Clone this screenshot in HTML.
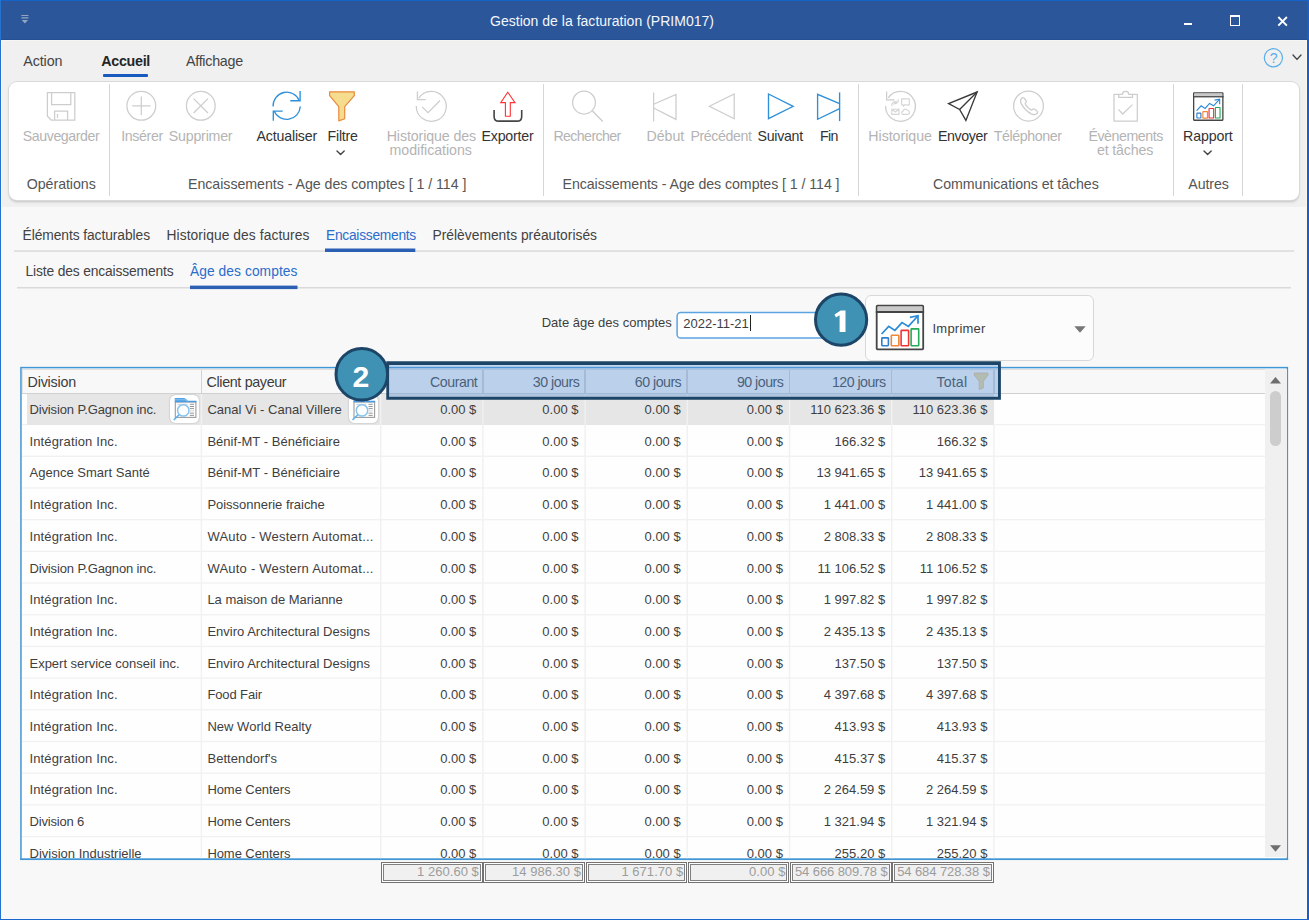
<!DOCTYPE html><html lang="fr"><head><meta charset="utf-8"><title>Gestion de la facturation</title><style>
html,body{margin:0;padding:0;}
body{width:1309px;height:920px;position:relative;overflow:hidden;background:#f8f8f8;font-family:"Liberation Sans",sans-serif;}
.t{position:absolute;white-space:pre;line-height:1;font-family:"Liberation Sans",sans-serif;}
.a{position:absolute;}
svg{position:absolute;overflow:visible;}

</style></head><body>
<div class="a" style="left:0;top:0;width:1309px;height:40px;background:#2b579a;"></div>
<div class="a" style="left:0;top:39px;width:1309px;height:1px;background:#254f94;"></div>
<div class="a" style="left:0;top:40px;width:1309px;height:41px;background:#f0f0f0;"></div>
<div class="a" style="left:0;top:81px;width:1309px;height:126px;background:#f0f0f0;"></div>
<div class="a" style="left:0;top:207px;width:1309px;height:713px;background:#f8f8f8;"></div>
<div class="a" style="left:9px;top:82px;width:1290px;height:118px;background:#fff;border-radius:8px;box-shadow:0 0 0 1px #d9d9d9,0 2px 2.5px rgba(0,0,0,.2);"></div>
<div class="a" style="left:109px;top:84px;width:1.4px;height:112px;background:#d6d6d6;"></div>
<div class="a" style="left:543px;top:84px;width:1.4px;height:112px;background:#d6d6d6;"></div>
<div class="a" style="left:858px;top:84px;width:1.4px;height:112px;background:#d6d6d6;"></div>
<div class="a" style="left:1173px;top:84px;width:1.4px;height:112px;background:#d6d6d6;"></div>
<div class="a" style="left:1242px;top:84px;width:1.4px;height:112px;background:#d6d6d6;"></div>
<div class="a" style="left:0;top:0;width:1309px;height:1px;background:#1463c9;"></div>
<div class="a" style="left:0;top:0;width:1px;height:920px;background:#2572cf;"></div>
<div class="a" style="left:1307px;top:0;width:2px;height:920px;background:#1a5fc4;"></div>
<div class="a" style="left:0;top:919px;width:1309px;height:1px;background:#1a66cc;"></div>
<div class="a" style="left:1px;top:40px;width:1px;height:879px;background:#fbf9f4;"></div>
<div class="a" style="left:1306px;top:40px;width:1px;height:879px;background:#fbf7ea;"></div>
<div class="a" style="left:1px;top:40px;width:1306px;height:1px;background:#f7f5f1;"></div>
<div class="a" style="left:1px;top:918px;width:1306px;height:1px;background:#fbf7ea;"></div>
<div class="a" style="left:1184px;top:23px;width:8px;height:2.4px;background:#fff;"></div>
<div class="a" style="left:1229.7px;top:15.3px;width:8.6px;height:7.4px;border:1.7px solid #fff;border-top-width:2.9px;"></div>
<svg style="left:1277px;top:16px" width="11" height="11" viewBox="0 0 11 11"><path d="M1.3 1 L9.9 9.6 M9.9 1 L1.3 9.6" stroke="#fff" stroke-width="1.9" fill="none"/></svg>
<svg style="left:21px;top:14.3px" width="8" height="11" viewBox="0 0 8 11"><path d="M0.4 1.5h7M0.4 3.9h7" stroke="#97a6c0" stroke-width="1.1"/><path d="M0.8 5.9h6.2L3.9 9.6z" fill="#97a6c0"/></svg>
<div class="a" style="left:103px;top:73.6px;width:45px;height:3px;background:#185abd;border-radius:1px;"></div>
<svg style="left:336.4px;top:150.2px" width="9.2" height="5.6" viewBox="-4.6 -2.8 9.2 5.6"><path d="M-3.6 -1.8 L0 1.8 L3.6 -1.8" stroke="#444" stroke-width="1.4" fill="none" stroke-linecap="round" stroke-linejoin="round"/></svg>
<svg style="left:1202.7px;top:150.2px" width="9.2" height="5.6" viewBox="-4.6 -2.8 9.2 5.6"><path d="M-3.6 -1.8 L0 1.8 L3.6 -1.8" stroke="#444" stroke-width="1.4" fill="none" stroke-linecap="round" stroke-linejoin="round"/></svg>
<svg style="left:1292.3px;top:53.8px" width="10" height="6.4" viewBox="-5 -3.2 10 6.4"><path d="M-4 -2.2 L0 2.2 L4 -2.2" stroke="#444" stroke-width="1.4" fill="none" stroke-linecap="round" stroke-linejoin="round"/></svg>
<svg style="left:0px;top:0px" width="1309" height="210" viewBox="0 0 1309 210">
<g fill="none" stroke="#cdcdcd" stroke-width="1.25" stroke-linejoin="miter">
<path d="M47.4 92.7H74.8V120H51.2L47.4 116.2Z"/>
<path d="M51.6 92.7V104.6H70.8V92.7"/>
<path d="M54.6 120V111.2H67.6V120"/>
<path d="M57.5 114V117.8"/>
<circle cx="141.3" cy="105.8" r="14.4"/>
<path d="M132.2 105.8H150.5M141.3 96.6V115"/>
<circle cx="200.8" cy="105.8" r="14.4"/>
<path d="M193.6 98.6L208 113M208 98.6L193.6 113"/>
</g></svg>
<svg style="left:0px;top:0px" width="1309" height="210" viewBox="0 0 1309 210">
<g fill="none" stroke="#2e90d8" stroke-width="1.35">
<path d="M273.12 106.51A13.6 13.6 0 0 1 299.31 100.71"/>
<path d="M300.1 91.1V100.7H290.3"/>
<path d="M300.28 106.51A13.6 13.6 0 0 1 274.09 110.89"/>
<path d="M273.3 120.7V111.1H282.7"/>
</g>
<path d="M329.6 91.8H354.3V95.6L344.7 106.6V118.8L338.8 120.9V106.6L329.6 95.6Z" fill="#f6dc8e" stroke="#e98a3c" stroke-width="1.2" stroke-linejoin="round"/>
</svg>
<svg style="left:0px;top:0px" width="1309" height="210" viewBox="0 0 1309 210">
<g fill="none" stroke="#cdcdcd" stroke-width="1.25">
<path d="M416.31 105.88A15.0 15.0 0 1 0 418.72 98.23"/>
<path d="M417.4 91.4V99.7H425.7"/>
<path d="M422.2 106.9L428 112.6L440.1 100.5"/>
</g>
<path d="M494.1 110.1V116.4Q494.1 121.1 498.8 121.1H517Q521.7 121.1 521.7 116.4V110.1" fill="none" stroke="#444" stroke-width="1.6"/>
<path d="M507.8 92.2L515 102.6H510.3V116.2H505.4V102.6H500.7Z" fill="#fff" stroke="#f33" stroke-width="1.1" stroke-linejoin="miter"/>
</svg>
<svg style="left:0px;top:0px" width="1309" height="210" viewBox="0 0 1309 210">
<g fill="none" stroke="#cdcdcd" stroke-width="1.25" stroke-linejoin="miter">
<circle cx="584" cy="102.6" r="11.4"/>
<path d="M592.2 110.8L602.8 121.4" stroke-width="1.4"/>
<path d="M653.6 92.5V121.4"/>
<path d="M653.6 104.3L676 94.4V119.4L653.6 108"/>
<path d="M709.4 106.3L734.2 94V118.7Z"/>
</g>
<g fill="none" stroke="#2e90d8" stroke-width="1.35" stroke-linejoin="miter">
<path d="M793.2 106.3L768.5 94V118.7Z"/>
<path d="M839.6 92.4V121.1"/>
<path d="M839.6 103.7L817.6 94.3V119.3L839.6 108.7"/>
</g>
</svg>
<svg style="left:0px;top:0px" width="1309" height="210" viewBox="0 0 1309 210">
<g fill="none" stroke="#cdcdcd" stroke-width="1.25">
<path d="M885.61 105.88A14.9 14.9 0 1 0 888.29 97.85"/>
<path d="M886.6 91.5V99.9H894.4"/>
</g>
<g fill="none" stroke="#d6d6d6" stroke-width="1.15" stroke-linejoin="round" stroke-linecap="round">
<path d="M892.3 105.6a1.6 1.6 0 0 1 0-2.3l1.2-1.2a1.6 1.6 0 0 1 2.3 0M897.9 99.6a1.6 1.6 0 0 1 0 2.3l-1.2 1.2a1.6 1.6 0 0 1-2.3 0M893.8 104.1L896.4 101.5"/>
<path d="M901.6 98.9H909.3V104.8H904.6L903.3 106.3V104.8H901.6Z"/>
<path d="M891.8 109.2H899V114.4H891.8ZM891.8 109.2L895.4 112L899 109.2"/>
<path d="M903 114.4a1.7 1.7 0 0 1 0-3.3a2.4 2.4 0 0 1 4.5-.6a2 2 0 0 1 .6 3.9Z"/>
</g>
<g fill="none" stroke="#3a3a3a" stroke-width="1.35" stroke-linejoin="miter">
<path d="M977.1 92L948.6 103.6L959.6 109.5L965.9 120.4Z"/>
<path d="M959.6 109.5L977.1 92"/>
</g>
<g fill="none" stroke="#cdcdcd" stroke-width="1.25" stroke-linejoin="round">
<circle cx="1028.5" cy="106.1" r="14.9"/>
<path d="M1021.4 98.6c.9-1.1 1.9-1.4 2.7-.5l1.9 2.4c.6.8.4 1.6-.3 2.2c-.6.5-.7 1.1-.2 1.9c1.400 2.100 3.000 3.700 5.100 5.100c.8.500 1.400.400 1.900-.2c.6-.7 1.400-.9 2.200-.3l2.400 1.900c.9.800.6 1.800-.5 2.700c-1.500 1.200-3.300 1.100-5.300.1c-4.300-2.300-7.700-5.700-10-10c-1-2-1.100-3.800.1-5.300Z"/>
<path d="M1118.700 94.300H1114V121H1137.300V94.300H1132.500"/>
<path d="M1118.700 94.300V97.300H1132.500V94.300H1128.700C1128.700 90.500 1122.500 90.500 1122.500 94.300Z"/>
<path d="M1118.400 109.400L1122.700 114L1132.400 104.600" stroke-linejoin="miter"/>
</g>
</svg>
<svg style="left:0;top:0" width="1309" height="920" viewBox="0 0 1309 920"><rect x="1193.65" y="92.85" width="29.23" height="27.39" rx="0.51" fill="#fff" stroke="#454545" stroke-width="1.3"/>
<rect x="1194.30" y="93.50" width="27.93" height="2.87" fill="#c9c9c9"/>
<path d="M1193.00 96.75H1223.53" stroke="#454545" stroke-width="1.3" fill="none"/>
<rect x="1196.86" y="113.19" width="4.03" height="4.79" rx="0.38" fill="#fff" stroke="#2f7fd0" stroke-width="1.15"/>
<rect x="1202.87" y="111.55" width="4.60" height="6.50" rx="0.38" fill="#fff" stroke="#f0883a" stroke-width="1.15"/>
<rect x="1209.06" y="108.45" width="4.60" height="9.59" rx="0.38" fill="#fff" stroke="#ee3338" stroke-width="1.15"/>
<rect x="1215.38" y="107.50" width="4.66" height="10.54" rx="0.38" fill="#fff" stroke="#22ac55" stroke-width="1.15"/>
<path d="M1196.67 110.65L1201.15 105.79L1205.07 108.38L1209.56 103.45L1213.60 105.85L1219.42 99.47" fill="none" stroke="#2b8bd6" stroke-width="1.15" stroke-linejoin="miter"/>
<path d="M1214.55 100.10L1219.67 99.09L1219.67 104.21" fill="none" stroke="#2b8bd6" stroke-width="1.15" stroke-linejoin="miter"/></svg>
<svg style="left:0px;top:0px" width="1309" height="210" viewBox="0 0 1309 210"><circle cx="1273.4" cy="57.8" r="9.1" fill="none" stroke="#5aaeea" stroke-width="1.2"/></svg>
<svg style="left:0;top:0" width="1309" height="920" viewBox="0 0 1309 920"><rect x="14" y="250.3" width="1280.2" height="1.5" fill="#dadada"/><rect x="17" y="287" width="1274" height="1.5" fill="#dadada"/></svg>
<svg style="left:0;top:0" width="1309" height="920" viewBox="0 0 1309 920"><rect x="325" y="248.5" width="90.3" height="3.5" fill="#2b5fb4"/><rect x="190" y="285.6" width="107.5" height="3.5" fill="#2b5fb4"/></svg>
<svg style="left:0;top:0" width="1309" height="920" viewBox="0 0 1309 920"><rect x="677.1" y="312.6" width="171" height="25.4" rx="3.6" fill="#fff" stroke="#5aa4e2" stroke-width="1.5"/></svg>
<div class="a" style="left:750px;top:315px;width:1.2px;height:16px;background:#222;"></div>
<div class="a" style="left:865px;top:294.8px;width:226.6px;height:64.4px;background:#fcfcfc;border:1px solid #d8d8d8;border-radius:6px;"></div>
<svg style="left:0;top:0" width="1309" height="920" viewBox="0 0 1309 920"><rect x="876.70" y="305.70" width="46.50" height="43.60" rx="0.80" fill="#fff" stroke="#454545" stroke-width="1.8"/>
<rect x="877.60" y="306.60" width="44.70" height="4.80" fill="#c9c9c9"/>
<path d="M875.80 312.00H924.10" stroke="#454545" stroke-width="1.8" fill="none"/>
<rect x="881.80" y="337.90" width="6.60" height="7.80" rx="0.60" fill="#fff" stroke="#2f7fd0" stroke-width="1.6"/>
<rect x="891.30" y="335.30" width="7.50" height="10.50" rx="0.60" fill="#fff" stroke="#f0883a" stroke-width="1.6"/>
<rect x="901.10" y="330.40" width="7.50" height="15.40" rx="0.60" fill="#fff" stroke="#ee3338" stroke-width="1.6"/>
<rect x="911.10" y="328.90" width="7.60" height="16.90" rx="0.60" fill="#fff" stroke="#22ac55" stroke-width="1.6"/>
<path d="M881.60 334.00L888.70 326.30L894.90 330.40L902.00 322.60L908.40 326.40L917.60 316.30" fill="none" stroke="#2b8bd6" stroke-width="1.7" stroke-linejoin="miter"/>
<path d="M909.90 317.30L918.00 315.70L918.00 323.80" fill="none" stroke="#2b8bd6" stroke-width="1.7" stroke-linejoin="miter"/></svg>
<svg style="left:1073.6px;top:326.4px" width="12" height="7" viewBox="0 0 12 7"><path d="M0.3 0.3h11.4L6 6.8z" fill="#777"/></svg>
<div class="a" style="left:21px;top:368px;width:1266px;height:491px;background:#fefefe;"></div>
<svg style="left:0;top:0" width="1309" height="920" viewBox="0 0 1309 920"><rect x="20.95" y="367.6" width="1266.4" height="491.7" fill="none" stroke="#4196d6" stroke-width="1.5"/></svg>
<div class="a" style="left:22px;top:369px;width:1243px;height:24.7px;background:#f8f8f8;border-top:1.2px solid #e2dfdc;border-bottom:1.5px solid #d0d0d0;box-sizing:border-box;"></div>
<div class="a" style="left:200.5px;top:370px;width:1.5px;height:23px;background:#d4d4d4;"></div>
<div class="a" style="left:379.8px;top:370px;width:1.5px;height:23px;background:#d4d4d4;"></div>
<div class="a" style="left:482.0px;top:370px;width:1.5px;height:23px;background:#d4d4d4;"></div>
<div class="a" style="left:584.2px;top:370px;width:1.5px;height:23px;background:#d4d4d4;"></div>
<div class="a" style="left:686.4px;top:370px;width:1.5px;height:23px;background:#d4d4d4;"></div>
<div class="a" style="left:788.6px;top:370px;width:1.5px;height:23px;background:#d4d4d4;"></div>
<div class="a" style="left:890.8px;top:370px;width:1.5px;height:23px;background:#d4d4d4;"></div>
<div class="a" style="left:993.0px;top:370px;width:1.5px;height:23px;background:#d4d4d4;"></div>
<div class="a" style="left:22px;top:370px;width:1.2px;height:23px;background:#e2e2e2;"></div>
<div class="a" style="left:27px;top:394px;width:966.7px;height:31px;background:#e6e6e6;"></div>
<svg style="left:0;top:0" width="1309" height="920" viewBox="0 0 1309 920"><g fill="#f1f1f1"><rect x="22" y="423.94" width="5" height="1.3"/><rect x="994.4" y="423.94" width="270.6" height="1.3"/><rect x="22" y="455.63" width="1243" height="1.3"/><rect x="22" y="487.32" width="1243" height="1.3"/><rect x="22" y="519.01" width="1243" height="1.3"/><rect x="22" y="550.70" width="1243" height="1.3"/><rect x="22" y="582.39" width="1243" height="1.3"/><rect x="22" y="614.08" width="1243" height="1.3"/><rect x="22" y="645.77" width="1243" height="1.3"/><rect x="22" y="677.46" width="1243" height="1.3"/><rect x="22" y="709.15" width="1243" height="1.3"/><rect x="22" y="740.84" width="1243" height="1.3"/><rect x="22" y="772.53" width="1243" height="1.3"/><rect x="22" y="804.22" width="1243" height="1.3"/><rect x="22" y="835.91" width="1243" height="1.3"/><rect x="200.70" y="394" width="1.4" height="464.5"/><rect x="380.00" y="394" width="1.4" height="464.5"/><rect x="482.20" y="394" width="1.4" height="464.5"/><rect x="584.40" y="394" width="1.4" height="464.5"/><rect x="686.60" y="394" width="1.4" height="464.5"/><rect x="788.80" y="394" width="1.4" height="464.5"/><rect x="891.00" y="394" width="1.4" height="464.5"/><rect x="993.20" y="425.2" width="1.4" height="433.3"/></g></svg>
<div class="a" style="left:1265px;top:369px;width:21.6px;height:488px;background:#f0f0f0;"></div>
<div class="a" style="left:1269.7px;top:390.6px;width:11.5px;height:55px;background:#cdcdcd;border-radius:5.7px;"></div>
<svg style="left:1270px;top:376.8px" width="11" height="7" viewBox="0 0 11 7"><path d="M0 6.6L5.5 0L11 6.6z" fill="#6e6e6e"/></svg>
<svg style="left:1269.6px;top:844.5px" width="11" height="7" viewBox="0 0 11 7"><path d="M0 0.2L5.5 6.8L11 0.2z" fill="#6e6e6e"/></svg>
<div class="a" style="left:170.2px;top:394.8px;width:29px;height:28.6px;background:#fff;border-radius:5.5px;box-shadow:0 0 1.5px rgba(0,0,0,.35);"></div>
<svg style="left:0;top:0" width="1309" height="920" viewBox="0 0 1309 920">
<rect x="175.30" y="402" width="20.6" height="15.4" fill="#fff" stroke="#9b9b9b" stroke-width="1.1"/>
<path d="M174.80 398H184.40L187.20 400.8H196.50V402.3H174.80Z" fill="#4a9be2"/>
<path d="M174.80 399.6H185.60L187.40 401.4" stroke="#77b7ee" stroke-width="1.6" fill="none"/>
<g stroke="#8a8a8a" stroke-width="0.9">
<path d="M189.80 404.3H194.00M189.80 406.5H194.00M189.80 408.6H194.00M189.80 413.2H194.00M189.80 415.4H194.00"/>
<path d="M177.50 404.3H187.50" stroke="#c8c8c8"/>
<path d="M189.80 410.9H194.00" stroke="#cfcfcf"/>
</g>
<circle cx="183.30" cy="410.4" r="5.7" fill="#fff" stroke="#86c3ef" stroke-width="1.5"/>
<path d="M179.10 414.7L173.80 420" stroke="#5eb0ea" stroke-width="1.6" fill="none"/></svg>
<div class="a" style="left:348.9px;top:394.8px;width:29px;height:28.6px;background:#fff;border-radius:5.5px;box-shadow:0 0 1.5px rgba(0,0,0,.35);"></div>
<svg style="left:0;top:0" width="1309" height="920" viewBox="0 0 1309 920">
<rect x="354.00" y="402" width="20.6" height="15.4" fill="#fff" stroke="#9b9b9b" stroke-width="1.1"/>
<path d="M353.50 398H363.10L365.90 400.8H375.20V402.3H353.50Z" fill="#4a9be2"/>
<path d="M353.50 399.6H364.30L366.10 401.4" stroke="#77b7ee" stroke-width="1.6" fill="none"/>
<g stroke="#8a8a8a" stroke-width="0.9">
<path d="M368.50 404.3H372.70M368.50 406.5H372.70M368.50 408.6H372.70M368.50 413.2H372.70M368.50 415.4H372.70"/>
<path d="M356.20 404.3H366.20" stroke="#c8c8c8"/>
<path d="M368.50 410.9H372.70" stroke="#cfcfcf"/>
</g>
<circle cx="362.00" cy="410.4" r="5.7" fill="#fff" stroke="#86c3ef" stroke-width="1.5"/>
<path d="M357.80 414.7L352.50 420" stroke="#5eb0ea" stroke-width="1.6" fill="none"/></svg>
<svg style="left:0;top:0" width="1309" height="920" viewBox="0 0 1309 920"><path d="M974.2 373.1H988V375L983.3 381.3V388L979.2 389.6V381.3L974.2 375Z" fill="#e8d898" stroke="#e6b98c" stroke-width="0.9" stroke-linejoin="round"/></svg>
<span class="t " style="left:490px;top:14.00px;font-size:14px;color:#f4f6fb;letter-spacing:0.019px;">Gestion de la facturation (PRIM017)</span>
<span class="t " style="left:23.2px;top:53.85px;font-size:14.3px;color:#444;letter-spacing:-0.075px;">Action</span>
<span class="t " style="left:101.3px;top:53.85px;font-size:14.3px;color:#262626;font-weight:700;letter-spacing:-0.308px;">Accueil</span>
<span class="t " style="left:186px;top:53.85px;font-size:14.3px;color:#444;letter-spacing:-0.284px;">Affichage</span>
<span class="t " style="left:22.8px;top:128.90px;font-size:14.2px;color:#b4b4b4;letter-spacing:-0.432px;">Sauvegarder</span>
<span class="t " style="left:121.2px;top:128.90px;font-size:14.2px;color:#b4b4b4;letter-spacing:-0.351px;">Insérer</span>
<span class="t " style="left:168.8px;top:128.90px;font-size:14.2px;color:#b4b4b4;letter-spacing:-0.206px;">Supprimer</span>
<span class="t " style="left:256.6px;top:128.90px;font-size:14.2px;color:#333;letter-spacing:-0.190px;">Actualiser</span>
<span class="t " style="left:327.5px;top:128.90px;font-size:14.2px;color:#333;letter-spacing:-0.205px;">Filtre</span>
<span class="t " style="left:386.7px;top:128.90px;font-size:14.2px;color:#b4b4b4;letter-spacing:-0.100px;">Historique des</span>
<span class="t " style="left:389.6px;top:142.90px;font-size:14.2px;color:#b4b4b4;letter-spacing:-0.047px;">modifications</span>
<span class="t " style="left:481.6px;top:128.90px;font-size:14.2px;color:#333;letter-spacing:-0.228px;">Exporter</span>
<span class="t " style="left:553.4px;top:128.90px;font-size:14.2px;color:#b4b4b4;letter-spacing:-0.604px;">Rechercher</span>
<span class="t " style="left:646.4px;top:128.90px;font-size:14.2px;color:#b4b4b4;letter-spacing:0.008px;">Début</span>
<span class="t " style="left:690.4px;top:128.90px;font-size:14.2px;color:#b4b4b4;letter-spacing:-0.399px;">Précédent</span>
<span class="t " style="left:757.6px;top:128.90px;font-size:14.2px;color:#333;letter-spacing:-0.304px;">Suivant</span>
<span class="t " style="left:820px;top:128.90px;font-size:14.2px;color:#333;letter-spacing:-0.640px;">Fin</span>
<span class="t " style="left:868.3px;top:128.90px;font-size:14.2px;color:#b4b4b4;letter-spacing:-0.027px;">Historique</span>
<span class="t " style="left:938px;top:128.90px;font-size:14.2px;color:#333;letter-spacing:-0.378px;">Envoyer</span>
<span class="t " style="left:993.8px;top:128.90px;font-size:14.2px;color:#b4b4b4;letter-spacing:-0.408px;">Téléphoner</span>
<span class="t " style="left:1088.4px;top:128.90px;font-size:14.2px;color:#b4b4b4;letter-spacing:-0.428px;">Évènements</span>
<span class="t " style="left:1097px;top:142.90px;font-size:14.2px;color:#b4b4b4;letter-spacing:-0.153px;">et tâches</span>
<span class="t " style="left:1183px;top:128.90px;font-size:14.2px;color:#333;letter-spacing:-0.112px;">Rapport</span>
<span class="t " style="left:26.8px;top:176.90px;font-size:14.2px;color:#555;letter-spacing:-0.051px;">Opérations</span>
<span class="t " style="left:188px;top:176.90px;font-size:14.2px;color:#555;letter-spacing:-0.030px;">Encaissements - Age des comptes [ 1 / 114 ]</span>
<span class="t " style="left:562.5px;top:176.90px;font-size:14.2px;color:#555;letter-spacing:-0.063px;">Encaissements - Age des comptes [ 1 / 114 ]</span>
<span class="t " style="left:933.1px;top:176.90px;font-size:14.2px;color:#555;letter-spacing:-0.066px;">Communications et tâches</span>
<span class="t " style="left:1188.3px;top:176.90px;font-size:14.2px;color:#555;letter-spacing:-0.086px;">Autres</span>
<span class="t " style="left:1269.8px;top:50.90px;font-size:14.2px;color:#5aaeea;letter-spacing:-0.691px;">?</span>
<span class="t " style="left:22.5px;top:228.60px;font-size:13.8px;color:#424242;letter-spacing:-0.067px;">Éléments facturables</span>
<span class="t " style="left:166.5px;top:228.60px;font-size:13.8px;color:#424242;letter-spacing:0.082px;">Historique des factures</span>
<span class="t " style="left:326px;top:228.60px;font-size:13.8px;color:#2a6dcc;letter-spacing:-0.274px;">Encaissements</span>
<span class="t " style="left:432.5px;top:228.60px;font-size:13.8px;color:#424242;letter-spacing:0.016px;">Prélèvements préautorisés</span>
<span class="t " style="left:25.5px;top:264.60px;font-size:13.8px;color:#424242;letter-spacing:-0.135px;">Liste des encaissements</span>
<span class="t " style="left:190px;top:264.60px;font-size:13.8px;color:#2a6dcc;letter-spacing:0.059px;">Âge des comptes</span>
<span class="t " style="left:541.7px;top:316.00px;font-size:13px;color:#3e3e3e;letter-spacing:0.001px;">Date âge des comptes</span>
<span class="t " style="left:683.3px;top:317.00px;font-size:13px;color:#3e3e3e;letter-spacing:-0.005px;">2022-11-21</span>
<span class="t " style="left:932.5px;top:322.00px;font-size:13px;color:#3e3e3e;letter-spacing:0.227px;">Imprimer</span>
<span class="t " style="left:27.5px;top:374.85px;font-size:14.3px;color:#3c3c3c;letter-spacing:-0.183px;">Division</span>
<span class="t " style="left:206.5px;top:374.85px;font-size:14.3px;color:#3c3c3c;letter-spacing:-0.342px;">Client payeur</span>
<span class="t " style="left:430.1px;top:374.90px;font-size:14.2px;color:#3c3c3c;letter-spacing:-0.469px;">Courant</span>
<span class="t " style="left:532.8px;top:374.90px;font-size:14.2px;color:#3c3c3c;letter-spacing:-0.498px;">30 jours</span>
<span class="t " style="left:634.8px;top:374.90px;font-size:14.2px;color:#3c3c3c;letter-spacing:-0.511px;">60 jours</span>
<span class="t " style="left:736.9px;top:374.90px;font-size:14.2px;color:#3c3c3c;letter-spacing:-0.498px;">90 jours</span>
<span class="t " style="left:832px;top:374.90px;font-size:14.2px;color:#3c3c3c;letter-spacing:-0.531px;">120 jours</span>
<span class="t " style="left:936.5px;top:374.90px;font-size:14.2px;color:#3c3c3c;letter-spacing:0.146px;">Total</span>
<span class="t clip" style="left:29.5px;top:403.00px;font-size:13px;color:#3e3e3e;letter-spacing:-0.138px;">Division P.Gagnon inc.</span>
<span class="t clip" style="left:207.4px;top:403.00px;font-size:13px;color:#3e3e3e;letter-spacing:0.023px;">Canal Vi - Canal Villere</span>
<span class="t clip" style="right:832.7px;top:403.00px;font-size:13px;color:#3e3e3e;">0.00 $</span>
<span class="t clip" style="right:730.5px;top:403.00px;font-size:13px;color:#3e3e3e;">0.00 $</span>
<span class="t clip" style="right:628.3px;top:403.00px;font-size:13px;color:#3e3e3e;">0.00 $</span>
<span class="t clip" style="right:526.1px;top:403.00px;font-size:13px;color:#3e3e3e;">0.00 $</span>
<span class="t clip" style="right:423.8px;top:403.00px;font-size:13px;color:#3e3e3e;">110 623.36 $</span>
<span class="t clip" style="right:321.6px;top:403.00px;font-size:13px;color:#3e3e3e;">110 623.36 $</span>
<span class="t clip" style="left:29.5px;top:435.00px;font-size:13px;color:#3e3e3e;letter-spacing:0.138px;">Intégration Inc.</span>
<span class="t clip" style="left:207.4px;top:435.00px;font-size:13px;color:#3e3e3e;letter-spacing:0.027px;">Bénif-MT - Bénéficiaire</span>
<span class="t clip" style="right:832.7px;top:435.00px;font-size:13px;color:#3e3e3e;">0.00 $</span>
<span class="t clip" style="right:730.5px;top:435.00px;font-size:13px;color:#3e3e3e;">0.00 $</span>
<span class="t clip" style="right:628.3px;top:435.00px;font-size:13px;color:#3e3e3e;">0.00 $</span>
<span class="t clip" style="right:526.1px;top:435.00px;font-size:13px;color:#3e3e3e;">0.00 $</span>
<span class="t clip" style="right:423.8px;top:435.00px;font-size:13px;color:#3e3e3e;">166.32 $</span>
<span class="t clip" style="right:321.6px;top:435.00px;font-size:13px;color:#3e3e3e;">166.32 $</span>
<span class="t clip" style="left:29.5px;top:466.00px;font-size:13px;color:#3e3e3e;letter-spacing:0.018px;">Agence Smart Santé</span>
<span class="t clip" style="left:207.4px;top:466.00px;font-size:13px;color:#3e3e3e;letter-spacing:0.027px;">Bénif-MT - Bénéficiaire</span>
<span class="t clip" style="right:832.7px;top:466.00px;font-size:13px;color:#3e3e3e;">0.00 $</span>
<span class="t clip" style="right:730.5px;top:466.00px;font-size:13px;color:#3e3e3e;">0.00 $</span>
<span class="t clip" style="right:628.3px;top:466.00px;font-size:13px;color:#3e3e3e;">0.00 $</span>
<span class="t clip" style="right:526.1px;top:466.00px;font-size:13px;color:#3e3e3e;">0.00 $</span>
<span class="t clip" style="right:423.8px;top:466.00px;font-size:13px;color:#3e3e3e;">13 941.65 $</span>
<span class="t clip" style="right:321.6px;top:466.00px;font-size:13px;color:#3e3e3e;">13 941.65 $</span>
<span class="t clip" style="left:29.5px;top:498.00px;font-size:13px;color:#3e3e3e;letter-spacing:0.138px;">Intégration Inc.</span>
<span class="t clip" style="left:207.4px;top:498.00px;font-size:13px;color:#3e3e3e;letter-spacing:-0.020px;">Poissonnerie fraiche</span>
<span class="t clip" style="right:832.7px;top:498.00px;font-size:13px;color:#3e3e3e;">0.00 $</span>
<span class="t clip" style="right:730.5px;top:498.00px;font-size:13px;color:#3e3e3e;">0.00 $</span>
<span class="t clip" style="right:628.3px;top:498.00px;font-size:13px;color:#3e3e3e;">0.00 $</span>
<span class="t clip" style="right:526.1px;top:498.00px;font-size:13px;color:#3e3e3e;">0.00 $</span>
<span class="t clip" style="right:423.8px;top:498.00px;font-size:13px;color:#3e3e3e;">1 441.00 $</span>
<span class="t clip" style="right:321.6px;top:498.00px;font-size:13px;color:#3e3e3e;">1 441.00 $</span>
<span class="t clip" style="left:29.5px;top:530.00px;font-size:13px;color:#3e3e3e;letter-spacing:0.138px;">Intégration Inc.</span>
<span class="t clip" style="left:207.4px;top:530.00px;font-size:13px;color:#3e3e3e;letter-spacing:0.227px;">WAuto - Western Automat...</span>
<span class="t clip" style="right:832.7px;top:530.00px;font-size:13px;color:#3e3e3e;">0.00 $</span>
<span class="t clip" style="right:730.5px;top:530.00px;font-size:13px;color:#3e3e3e;">0.00 $</span>
<span class="t clip" style="right:628.3px;top:530.00px;font-size:13px;color:#3e3e3e;">0.00 $</span>
<span class="t clip" style="right:526.1px;top:530.00px;font-size:13px;color:#3e3e3e;">0.00 $</span>
<span class="t clip" style="right:423.8px;top:530.00px;font-size:13px;color:#3e3e3e;">2 808.33 $</span>
<span class="t clip" style="right:321.6px;top:530.00px;font-size:13px;color:#3e3e3e;">2 808.33 $</span>
<span class="t clip" style="left:29.5px;top:562.00px;font-size:13px;color:#3e3e3e;letter-spacing:-0.138px;">Division P.Gagnon inc.</span>
<span class="t clip" style="left:207.4px;top:562.00px;font-size:13px;color:#3e3e3e;letter-spacing:0.227px;">WAuto - Western Automat...</span>
<span class="t clip" style="right:832.7px;top:562.00px;font-size:13px;color:#3e3e3e;">0.00 $</span>
<span class="t clip" style="right:730.5px;top:562.00px;font-size:13px;color:#3e3e3e;">0.00 $</span>
<span class="t clip" style="right:628.3px;top:562.00px;font-size:13px;color:#3e3e3e;">0.00 $</span>
<span class="t clip" style="right:526.1px;top:562.00px;font-size:13px;color:#3e3e3e;">0.00 $</span>
<span class="t clip" style="right:423.8px;top:562.00px;font-size:13px;color:#3e3e3e;">11 106.52 $</span>
<span class="t clip" style="right:321.6px;top:562.00px;font-size:13px;color:#3e3e3e;">11 106.52 $</span>
<span class="t clip" style="left:29.5px;top:593.00px;font-size:13px;color:#3e3e3e;letter-spacing:0.138px;">Intégration Inc.</span>
<span class="t clip" style="left:207.4px;top:593.00px;font-size:13px;color:#3e3e3e;letter-spacing:-0.022px;">La maison de Marianne</span>
<span class="t clip" style="right:832.7px;top:593.00px;font-size:13px;color:#3e3e3e;">0.00 $</span>
<span class="t clip" style="right:730.5px;top:593.00px;font-size:13px;color:#3e3e3e;">0.00 $</span>
<span class="t clip" style="right:628.3px;top:593.00px;font-size:13px;color:#3e3e3e;">0.00 $</span>
<span class="t clip" style="right:526.1px;top:593.00px;font-size:13px;color:#3e3e3e;">0.00 $</span>
<span class="t clip" style="right:423.8px;top:593.00px;font-size:13px;color:#3e3e3e;">1 997.82 $</span>
<span class="t clip" style="right:321.6px;top:593.00px;font-size:13px;color:#3e3e3e;">1 997.82 $</span>
<span class="t clip" style="left:29.5px;top:625.00px;font-size:13px;color:#3e3e3e;letter-spacing:0.138px;">Intégration Inc.</span>
<span class="t clip" style="left:207.4px;top:625.00px;font-size:13px;color:#3e3e3e;letter-spacing:0.004px;">Enviro Architectural Designs</span>
<span class="t clip" style="right:832.7px;top:625.00px;font-size:13px;color:#3e3e3e;">0.00 $</span>
<span class="t clip" style="right:730.5px;top:625.00px;font-size:13px;color:#3e3e3e;">0.00 $</span>
<span class="t clip" style="right:628.3px;top:625.00px;font-size:13px;color:#3e3e3e;">0.00 $</span>
<span class="t clip" style="right:526.1px;top:625.00px;font-size:13px;color:#3e3e3e;">0.00 $</span>
<span class="t clip" style="right:423.8px;top:625.00px;font-size:13px;color:#3e3e3e;">2 435.13 $</span>
<span class="t clip" style="right:321.6px;top:625.00px;font-size:13px;color:#3e3e3e;">2 435.13 $</span>
<span class="t clip" style="left:29.5px;top:657.00px;font-size:13px;color:#3e3e3e;letter-spacing:-0.010px;">Expert service conseil inc.</span>
<span class="t clip" style="left:207.4px;top:657.00px;font-size:13px;color:#3e3e3e;letter-spacing:0.004px;">Enviro Architectural Designs</span>
<span class="t clip" style="right:832.7px;top:657.00px;font-size:13px;color:#3e3e3e;">0.00 $</span>
<span class="t clip" style="right:730.5px;top:657.00px;font-size:13px;color:#3e3e3e;">0.00 $</span>
<span class="t clip" style="right:628.3px;top:657.00px;font-size:13px;color:#3e3e3e;">0.00 $</span>
<span class="t clip" style="right:526.1px;top:657.00px;font-size:13px;color:#3e3e3e;">0.00 $</span>
<span class="t clip" style="right:423.8px;top:657.00px;font-size:13px;color:#3e3e3e;">137.50 $</span>
<span class="t clip" style="right:321.6px;top:657.00px;font-size:13px;color:#3e3e3e;">137.50 $</span>
<span class="t clip" style="left:29.5px;top:688.00px;font-size:13px;color:#3e3e3e;letter-spacing:0.138px;">Intégration Inc.</span>
<span class="t clip" style="left:207.4px;top:688.00px;font-size:13px;color:#3e3e3e;letter-spacing:-0.116px;">Food Fair</span>
<span class="t clip" style="right:832.7px;top:688.00px;font-size:13px;color:#3e3e3e;">0.00 $</span>
<span class="t clip" style="right:730.5px;top:688.00px;font-size:13px;color:#3e3e3e;">0.00 $</span>
<span class="t clip" style="right:628.3px;top:688.00px;font-size:13px;color:#3e3e3e;">0.00 $</span>
<span class="t clip" style="right:526.1px;top:688.00px;font-size:13px;color:#3e3e3e;">0.00 $</span>
<span class="t clip" style="right:423.8px;top:688.00px;font-size:13px;color:#3e3e3e;">4 397.68 $</span>
<span class="t clip" style="right:321.6px;top:688.00px;font-size:13px;color:#3e3e3e;">4 397.68 $</span>
<span class="t clip" style="left:29.5px;top:720.00px;font-size:13px;color:#3e3e3e;letter-spacing:0.138px;">Intégration Inc.</span>
<span class="t clip" style="left:207.4px;top:720.00px;font-size:13px;color:#3e3e3e;letter-spacing:0.019px;">New World Realty</span>
<span class="t clip" style="right:832.7px;top:720.00px;font-size:13px;color:#3e3e3e;">0.00 $</span>
<span class="t clip" style="right:730.5px;top:720.00px;font-size:13px;color:#3e3e3e;">0.00 $</span>
<span class="t clip" style="right:628.3px;top:720.00px;font-size:13px;color:#3e3e3e;">0.00 $</span>
<span class="t clip" style="right:526.1px;top:720.00px;font-size:13px;color:#3e3e3e;">0.00 $</span>
<span class="t clip" style="right:423.8px;top:720.00px;font-size:13px;color:#3e3e3e;">413.93 $</span>
<span class="t clip" style="right:321.6px;top:720.00px;font-size:13px;color:#3e3e3e;">413.93 $</span>
<span class="t clip" style="left:29.5px;top:752.00px;font-size:13px;color:#3e3e3e;letter-spacing:0.138px;">Intégration Inc.</span>
<span class="t clip" style="left:207.4px;top:752.00px;font-size:13px;color:#3e3e3e;letter-spacing:0.069px;">Bettendorf&#x27;s</span>
<span class="t clip" style="right:832.7px;top:752.00px;font-size:13px;color:#3e3e3e;">0.00 $</span>
<span class="t clip" style="right:730.5px;top:752.00px;font-size:13px;color:#3e3e3e;">0.00 $</span>
<span class="t clip" style="right:628.3px;top:752.00px;font-size:13px;color:#3e3e3e;">0.00 $</span>
<span class="t clip" style="right:526.1px;top:752.00px;font-size:13px;color:#3e3e3e;">0.00 $</span>
<span class="t clip" style="right:423.8px;top:752.00px;font-size:13px;color:#3e3e3e;">415.37 $</span>
<span class="t clip" style="right:321.6px;top:752.00px;font-size:13px;color:#3e3e3e;">415.37 $</span>
<span class="t clip" style="left:29.5px;top:783.00px;font-size:13px;color:#3e3e3e;letter-spacing:0.138px;">Intégration Inc.</span>
<span class="t clip" style="left:207.4px;top:783.00px;font-size:13px;color:#3e3e3e;letter-spacing:-0.068px;">Home Centers</span>
<span class="t clip" style="right:832.7px;top:783.00px;font-size:13px;color:#3e3e3e;">0.00 $</span>
<span class="t clip" style="right:730.5px;top:783.00px;font-size:13px;color:#3e3e3e;">0.00 $</span>
<span class="t clip" style="right:628.3px;top:783.00px;font-size:13px;color:#3e3e3e;">0.00 $</span>
<span class="t clip" style="right:526.1px;top:783.00px;font-size:13px;color:#3e3e3e;">0.00 $</span>
<span class="t clip" style="right:423.8px;top:783.00px;font-size:13px;color:#3e3e3e;">2 264.59 $</span>
<span class="t clip" style="right:321.6px;top:783.00px;font-size:13px;color:#3e3e3e;">2 264.59 $</span>
<span class="t clip" style="left:29.5px;top:815.00px;font-size:13px;color:#3e3e3e;letter-spacing:-0.176px;">Division 6</span>
<span class="t clip" style="left:207.4px;top:815.00px;font-size:13px;color:#3e3e3e;letter-spacing:-0.068px;">Home Centers</span>
<span class="t clip" style="right:832.7px;top:815.00px;font-size:13px;color:#3e3e3e;">0.00 $</span>
<span class="t clip" style="right:730.5px;top:815.00px;font-size:13px;color:#3e3e3e;">0.00 $</span>
<span class="t clip" style="right:628.3px;top:815.00px;font-size:13px;color:#3e3e3e;">0.00 $</span>
<span class="t clip" style="right:526.1px;top:815.00px;font-size:13px;color:#3e3e3e;">0.00 $</span>
<span class="t clip" style="right:423.8px;top:815.00px;font-size:13px;color:#3e3e3e;">1 321.94 $</span>
<span class="t clip" style="right:321.6px;top:815.00px;font-size:13px;color:#3e3e3e;">1 321.94 $</span>
<span class="t clip" style="left:29.5px;top:847.00px;font-size:13px;color:#3e3e3e;letter-spacing:0.005px;">Division Industrielle</span>
<span class="t clip" style="left:207.4px;top:847.00px;font-size:13px;color:#3e3e3e;letter-spacing:-0.068px;">Home Centers</span>
<span class="t clip" style="right:832.7px;top:847.00px;font-size:13px;color:#3e3e3e;">0.00 $</span>
<span class="t clip" style="right:730.5px;top:847.00px;font-size:13px;color:#3e3e3e;">0.00 $</span>
<span class="t clip" style="right:628.3px;top:847.00px;font-size:13px;color:#3e3e3e;">0.00 $</span>
<span class="t clip" style="right:526.1px;top:847.00px;font-size:13px;color:#3e3e3e;">0.00 $</span>
<span class="t clip" style="right:423.8px;top:847.00px;font-size:13px;color:#3e3e3e;">255.20 $</span>
<span class="t clip" style="right:321.6px;top:847.00px;font-size:13px;color:#3e3e3e;">255.20 $</span>
<div class="a" style="left:1px;top:860px;width:1306px;height:59px;background:#f8f8f8;"></div>
<svg style="left:0;top:0" width="1309" height="920" viewBox="0 0 1309 920"><rect x="20.2" y="858.55" width="1267.9" height="1.5" fill="#4196d6"/></svg>
<div class="a" style="left:381.1px;top:861.5px;width:101.8px;height:21.5px;box-sizing:border-box;border:1px solid #727272;background:#fff;"></div>
<div class="a" style="left:383.1px;top:863.5px;width:97.8px;height:17.5px;box-sizing:border-box;border:1px solid #808080;background:#f0f0f0;"></div>
<span class="t" style="right:830.2px;top:865.00px;font-size:13px;color:#9c9c9c;letter-spacing:0.03px;">1 260.60 $</span>
<div class="a" style="left:483.3px;top:861.5px;width:101.8px;height:21.5px;box-sizing:border-box;border:1px solid #727272;background:#fff;"></div>
<div class="a" style="left:485.3px;top:863.5px;width:97.8px;height:17.5px;box-sizing:border-box;border:1px solid #808080;background:#f0f0f0;"></div>
<span class="t" style="right:728.0px;top:865.00px;font-size:13px;color:#9c9c9c;letter-spacing:0.03px;">14 986.30 $</span>
<div class="a" style="left:585.5px;top:861.5px;width:101.8px;height:21.5px;box-sizing:border-box;border:1px solid #727272;background:#fff;"></div>
<div class="a" style="left:587.5px;top:863.5px;width:97.8px;height:17.5px;box-sizing:border-box;border:1px solid #808080;background:#f0f0f0;"></div>
<span class="t" style="right:625.8px;top:865.00px;font-size:13px;color:#9c9c9c;letter-spacing:0.03px;">1 671.70 $</span>
<div class="a" style="left:687.7px;top:861.5px;width:101.8px;height:21.5px;box-sizing:border-box;border:1px solid #727272;background:#fff;"></div>
<div class="a" style="left:689.7px;top:863.5px;width:97.8px;height:17.5px;box-sizing:border-box;border:1px solid #808080;background:#f0f0f0;"></div>
<span class="t" style="right:523.6px;top:865.00px;font-size:13px;color:#9c9c9c;letter-spacing:0.03px;">0.00 $</span>
<div class="a" style="left:789.9px;top:861.5px;width:101.8px;height:21.5px;box-sizing:border-box;border:1px solid #727272;background:#fff;"></div>
<div class="a" style="left:791.9px;top:863.5px;width:97.8px;height:17.5px;box-sizing:border-box;border:1px solid #808080;background:#f0f0f0;"></div>
<span class="t" style="right:421.4px;top:865.00px;font-size:13px;color:#9c9c9c;letter-spacing:-0.09px;">54 666 809.78 $</span>
<div class="a" style="left:892.1px;top:861.5px;width:101.8px;height:21.5px;box-sizing:border-box;border:1px solid #727272;background:#fff;"></div>
<div class="a" style="left:894.1px;top:863.5px;width:97.8px;height:17.5px;box-sizing:border-box;border:1px solid #808080;background:#f0f0f0;"></div>
<span class="t" style="right:319.2px;top:865.00px;font-size:13px;color:#9c9c9c;letter-spacing:-0.09px;">54 684 728.38 $</span>
<svg style="left:0;top:0" width="1309" height="920" viewBox="0 0 1309 920"><circle cx="361.8" cy="374.3" r="25.80" fill="#3f92b3" stroke="#1d4568" stroke-width="3.0"/></svg>
<span class="t" style="left:340.90000000000003px;width:40px;text-align:center;top:361.64px;font-size:30.2px;font-weight:700;color:#fff;">2</span>
<svg style="left:0;top:0" width="1309" height="920" viewBox="0 0 1309 920"><rect x="389.1" y="365.1" width="608.9" height="31.7" fill="rgba(96,150,214,0.40)"/><path fill-rule="evenodd" fill="#1d4568" d="M386.3 361.2H1000.9V399.8H386.3ZM389.1 365.1V396.8H998V365.1Z"/></svg>
<svg style="left:0;top:0" width="1309" height="920" viewBox="0 0 1309 920"><circle cx="841.1" cy="319.7" r="25.60" fill="#3f92b3" stroke="#1d4568" stroke-width="3.0"/></svg>
<svg style="left:0;top:0" width="1309" height="920" viewBox="0 0 1309 920"><path d="M845.5 310.5H840.7L834.5 314.4L836 317.4L839.6 315.2V332H845.5Z" fill="#fff"/></svg>
</body></html>
